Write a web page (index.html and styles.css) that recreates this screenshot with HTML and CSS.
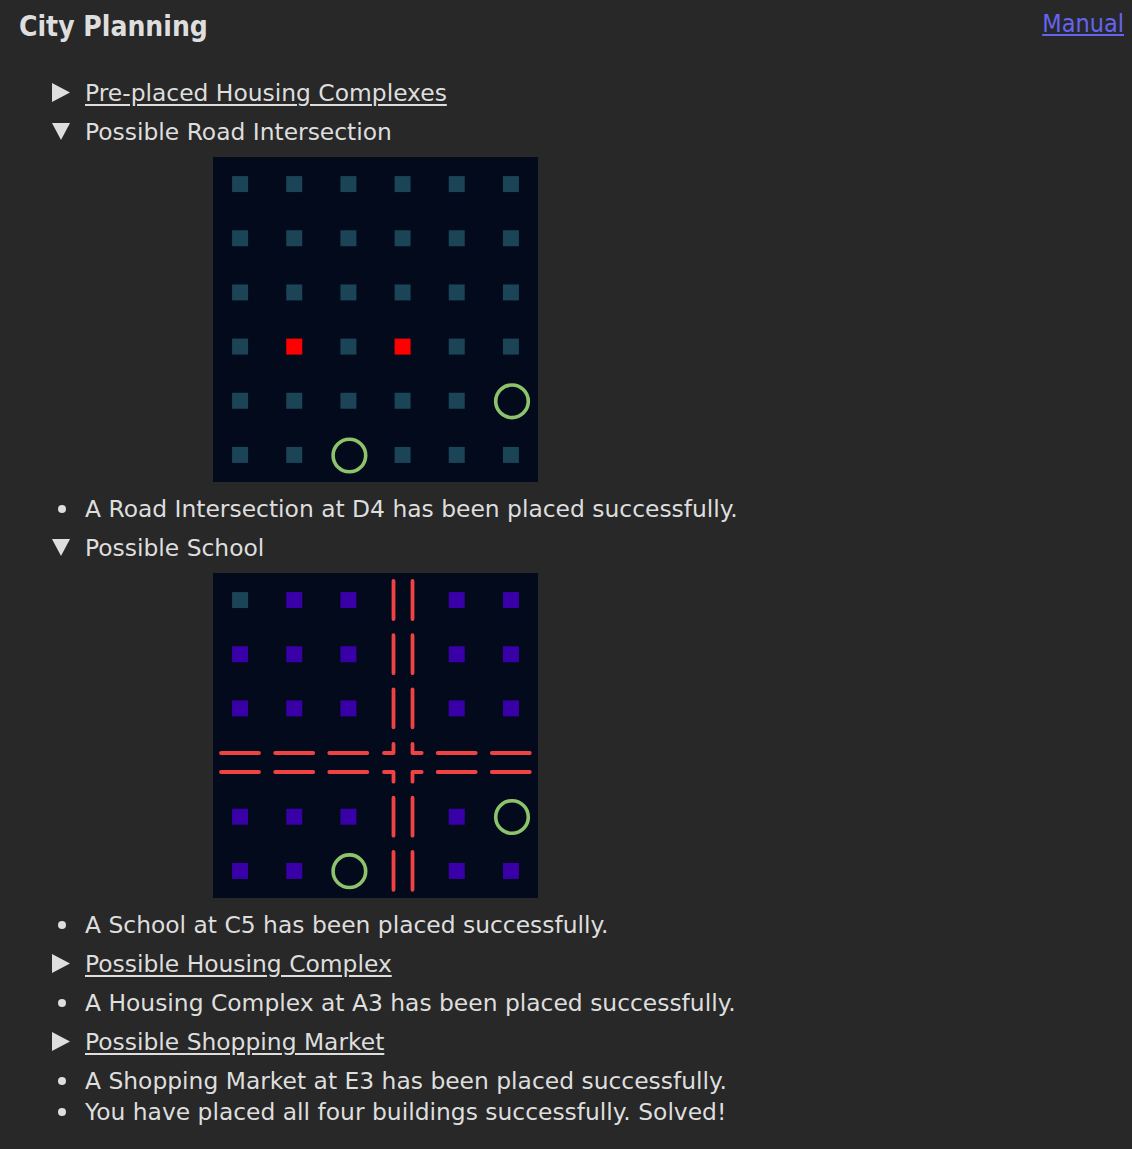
FILE: index.html
```html
<!DOCTYPE html>
<html lang="en">
<head>
<meta charset="utf-8">
<title>City Planning</title>
<link rel="stylesheet" href="styles.css">
</head>
<body>
<header class="top">
  <h1 class="title">City Planning</h1>
  <a class="manual" href="#">Manual</a>
</header>
<ul class="log">
  <li class="step">
    <details>
      <summary><span class="mark"><svg class="tri" width="18" height="19" viewBox="0 0 18 19"><polygon points="0,0 18,9.5 0,19"/></svg><svg class="tri-open" width="18" height="17" viewBox="0 0 18 17"><polygon points="0,0 18,0 9,17"/></svg></span><span class="label">Pre-placed Housing Complexes</span></summary>
    </details>
  </li>
  <li class="step">
    <details open>
      <summary><span class="mark"><svg class="tri" width="18" height="19" viewBox="0 0 18 19"><polygon points="0,0 18,9.5 0,19"/></svg><svg class="tri-open" width="18" height="17" viewBox="0 0 18 17"><polygon points="0,0 18,0 9,17"/></svg></span><span class="label">Possible Road Intersection</span></summary>
      <div class="board">
        <svg width="325" height="325" viewBox="0 0 325 325">
          <rect width="325" height="325" class="bg"/>
          <g class="sq-empty">
            <rect x="19.08" y="19.08" width="16" height="16"/><rect x="73.25" y="19.08" width="16" height="16"/><rect x="127.42" y="19.08" width="16" height="16"/><rect x="181.58" y="19.08" width="16" height="16"/><rect x="235.75" y="19.08" width="16" height="16"/><rect x="289.92" y="19.08" width="16" height="16"/>
            <rect x="19.08" y="73.25" width="16" height="16"/><rect x="73.25" y="73.25" width="16" height="16"/><rect x="127.42" y="73.25" width="16" height="16"/><rect x="181.58" y="73.25" width="16" height="16"/><rect x="235.75" y="73.25" width="16" height="16"/><rect x="289.92" y="73.25" width="16" height="16"/>
            <rect x="19.08" y="127.42" width="16" height="16"/><rect x="73.25" y="127.42" width="16" height="16"/><rect x="127.42" y="127.42" width="16" height="16"/><rect x="181.58" y="127.42" width="16" height="16"/><rect x="235.75" y="127.42" width="16" height="16"/><rect x="289.92" y="127.42" width="16" height="16"/>
            <rect x="19.08" y="181.58" width="16" height="16"/><rect x="127.42" y="181.58" width="16" height="16"/><rect x="235.75" y="181.58" width="16" height="16"/><rect x="289.92" y="181.58" width="16" height="16"/>
            <rect x="19.08" y="235.75" width="16" height="16"/><rect x="73.25" y="235.75" width="16" height="16"/><rect x="127.42" y="235.75" width="16" height="16"/><rect x="181.58" y="235.75" width="16" height="16"/><rect x="235.75" y="235.75" width="16" height="16"/>
            <rect x="19.08" y="289.92" width="16" height="16"/><rect x="73.25" y="289.92" width="16" height="16"/><rect x="181.58" y="289.92" width="16" height="16"/><rect x="235.75" y="289.92" width="16" height="16"/><rect x="289.92" y="289.92" width="16" height="16"/>
          </g>
          <g class="sq-red">
            <rect x="73.25" y="181.58" width="16" height="16"/><rect x="181.58" y="181.58" width="16" height="16"/>
          </g>
          <g class="spot">
            <circle cx="299" cy="244.3" r="16.3"/>
            <circle cx="136.4" cy="298.5" r="16.3"/>
          </g>
        </svg>
      </div>
    </details>
  </li>
  <li class="entry"><span class="mark"><span class="dot"></span></span><span class="label">A Road Intersection at D4 has been placed successfully.</span></li>
  <li class="step">
    <details open>
      <summary><span class="mark"><svg class="tri" width="18" height="19" viewBox="0 0 18 19"><polygon points="0,0 18,9.5 0,19"/></svg><svg class="tri-open" width="18" height="17" viewBox="0 0 18 17"><polygon points="0,0 18,0 9,17"/></svg></span><span class="label">Possible School</span></summary>
      <div class="board">
        <svg width="325" height="325" viewBox="0 0 325 325">
          <rect width="325" height="325" class="bg"/>
          <g class="sq-empty">
            <rect x="19.08" y="19.08" width="16" height="16"/>
          </g>
          <g class="sq-school">
            <rect x="73.25" y="19.08" width="16" height="16"/><rect x="127.42" y="19.08" width="16" height="16"/><rect x="235.75" y="19.08" width="16" height="16"/><rect x="289.92" y="19.08" width="16" height="16"/>
            <rect x="19.08" y="73.25" width="16" height="16"/><rect x="73.25" y="73.25" width="16" height="16"/><rect x="127.42" y="73.25" width="16" height="16"/><rect x="235.75" y="73.25" width="16" height="16"/><rect x="289.92" y="73.25" width="16" height="16"/>
            <rect x="19.08" y="127.42" width="16" height="16"/><rect x="73.25" y="127.42" width="16" height="16"/><rect x="127.42" y="127.42" width="16" height="16"/><rect x="235.75" y="127.42" width="16" height="16"/><rect x="289.92" y="127.42" width="16" height="16"/>
            <rect x="19.08" y="235.75" width="16" height="16"/><rect x="73.25" y="235.75" width="16" height="16"/><rect x="127.42" y="235.75" width="16" height="16"/><rect x="235.75" y="235.75" width="16" height="16"/>
            <rect x="19.08" y="289.92" width="16" height="16"/><rect x="73.25" y="289.92" width="16" height="16"/><rect x="235.75" y="289.92" width="16" height="16"/><rect x="289.92" y="289.92" width="16" height="16"/>
          </g>
          <g class="road">
            <path d="M180.5 8V46M199.5 8V46M180.5 62.2V100.2M199.5 62.2V100.2M180.5 116.3V154.3M199.5 116.3V154.3M180.5 224.7V262.7M199.5 224.7V262.7M180.5 278.8V316.8M199.5 278.8V316.8"/>
            <path d="M8 180H46M8 199H46M62.2 180H100.2M62.2 199H100.2M116.3 180H154.3M116.3 199H154.3M224.7 180H262.7M224.7 199H262.7M278.8 180H316.8M278.8 199H316.8"/>
            <path d="M180.5 171V180H171M199.5 171V180H208.7M171 199H180.5V208.7M208.7 199H199.5V208.7"/>
          </g>
          <g class="spot">
            <circle cx="299" cy="244" r="16.3"/>
            <circle cx="136.4" cy="298.2" r="16.3"/>
          </g>
        </svg>
      </div>
    </details>
  </li>
  <li class="entry"><span class="mark"><span class="dot"></span></span><span class="label">A School at C5 has been placed successfully.</span></li>
  <li class="step">
    <details>
      <summary><span class="mark"><svg class="tri" width="18" height="19" viewBox="0 0 18 19"><polygon points="0,0 18,9.5 0,19"/></svg><svg class="tri-open" width="18" height="17" viewBox="0 0 18 17"><polygon points="0,0 18,0 9,17"/></svg></span><span class="label">Possible Housing Complex</span></summary>
    </details>
  </li>
  <li class="entry"><span class="mark"><span class="dot"></span></span><span class="label">A Housing Complex at A3 has been placed successfully.</span></li>
  <li class="step">
    <details>
      <summary><span class="mark"><svg class="tri" width="18" height="19" viewBox="0 0 18 19"><polygon points="0,0 18,9.5 0,19"/></svg><svg class="tri-open" width="18" height="17" viewBox="0 0 18 17"><polygon points="0,0 18,0 9,17"/></svg></span><span class="label">Possible Shopping Market</span></summary>
    </details>
  </li>
  <li class="entry"><span class="mark"><span class="dot"></span></span><span class="label">A Shopping Market at E3 has been placed successfully.</span></li>
  <li class="entry"><span class="mark"><span class="dot"></span></span><span class="label">You have placed all four buildings successfully. Solved!</span></li>
</ul>
</body>
</html>
```
FILE: styles.css
```css
html, body {
  margin: 0;
  padding: 0;
  background: #282828;
}
body {
  color: #dedede;
  font-family: "DejaVu Sans", sans-serif;
  font-size: 23.4px;
  min-height: 1149px;
}
.top {
  display: flex;
  justify-content: space-between;
  align-items: flex-start;
  height: 60px;
  padding: 0 8px 0 19px;
}
.title {
  margin: 0;
  font-family: "DejaVu Sans Condensed", "DejaVu Sans", sans-serif;
  font-size: 28px;
  font-weight: bold;
  line-height: 54px;
  color: #dedede;
}
.manual {
  color: #6464f2;
  font-family: "DejaVu Sans Condensed", "DejaVu Sans", sans-serif;
  font-size: 25px;
  line-height: 48px;
  text-decoration: underline;
}
.log {
  list-style: none;
  margin: 0;
  padding: 9px 0 0 52px;
}
.step details {
  margin: 8px 0;
}
.log > li.step {
  margin: 8px 0;
}
summary {
  list-style: none;
  display: flex;
  align-items: center;
  height: 31px;
  cursor: pointer;
}
summary::-webkit-details-marker {
  display: none;
}
.mark {
  width: 33px;
  flex: none;
  display: flex;
  align-items: center;
}
.tri, .tri-open {
  fill: #dedede;
}
.tri-open {
  display: none;
}
details[open] > summary .tri {
  display: none;
}
details[open] > summary .tri-open {
  display: block;
}
details:not([open]) > summary .label {
  text-decoration: underline;
  text-underline-offset: 3px;
}
.entry {
  display: flex;
  align-items: center;
  height: 31px;
}
.dot {
  display: block;
  width: 8px;
  height: 8px;
  border-radius: 50%;
  background: #dedede;
  margin-left: 6px;
}
.label {
  white-space: nowrap;
}
.board {
  margin: 10px 0 11px 161px;
  width: 325px;
  height: 325px;
}
.board svg {
  display: block;
}
.bg {
  fill: #020a1c;
}
.sq-empty rect {
  fill: #1b4457;
}
.sq-red rect {
  fill: #ff0000;
}
.sq-school rect {
  fill: #3a00a8;
}
.spot circle {
  fill: none;
  stroke: #8dc46b;
  stroke-width: 3.6;
}
.road path {
  fill: none;
  stroke: #f04242;
  stroke-width: 3.8;
  stroke-linecap: round;
  stroke-linejoin: round;
}
```
